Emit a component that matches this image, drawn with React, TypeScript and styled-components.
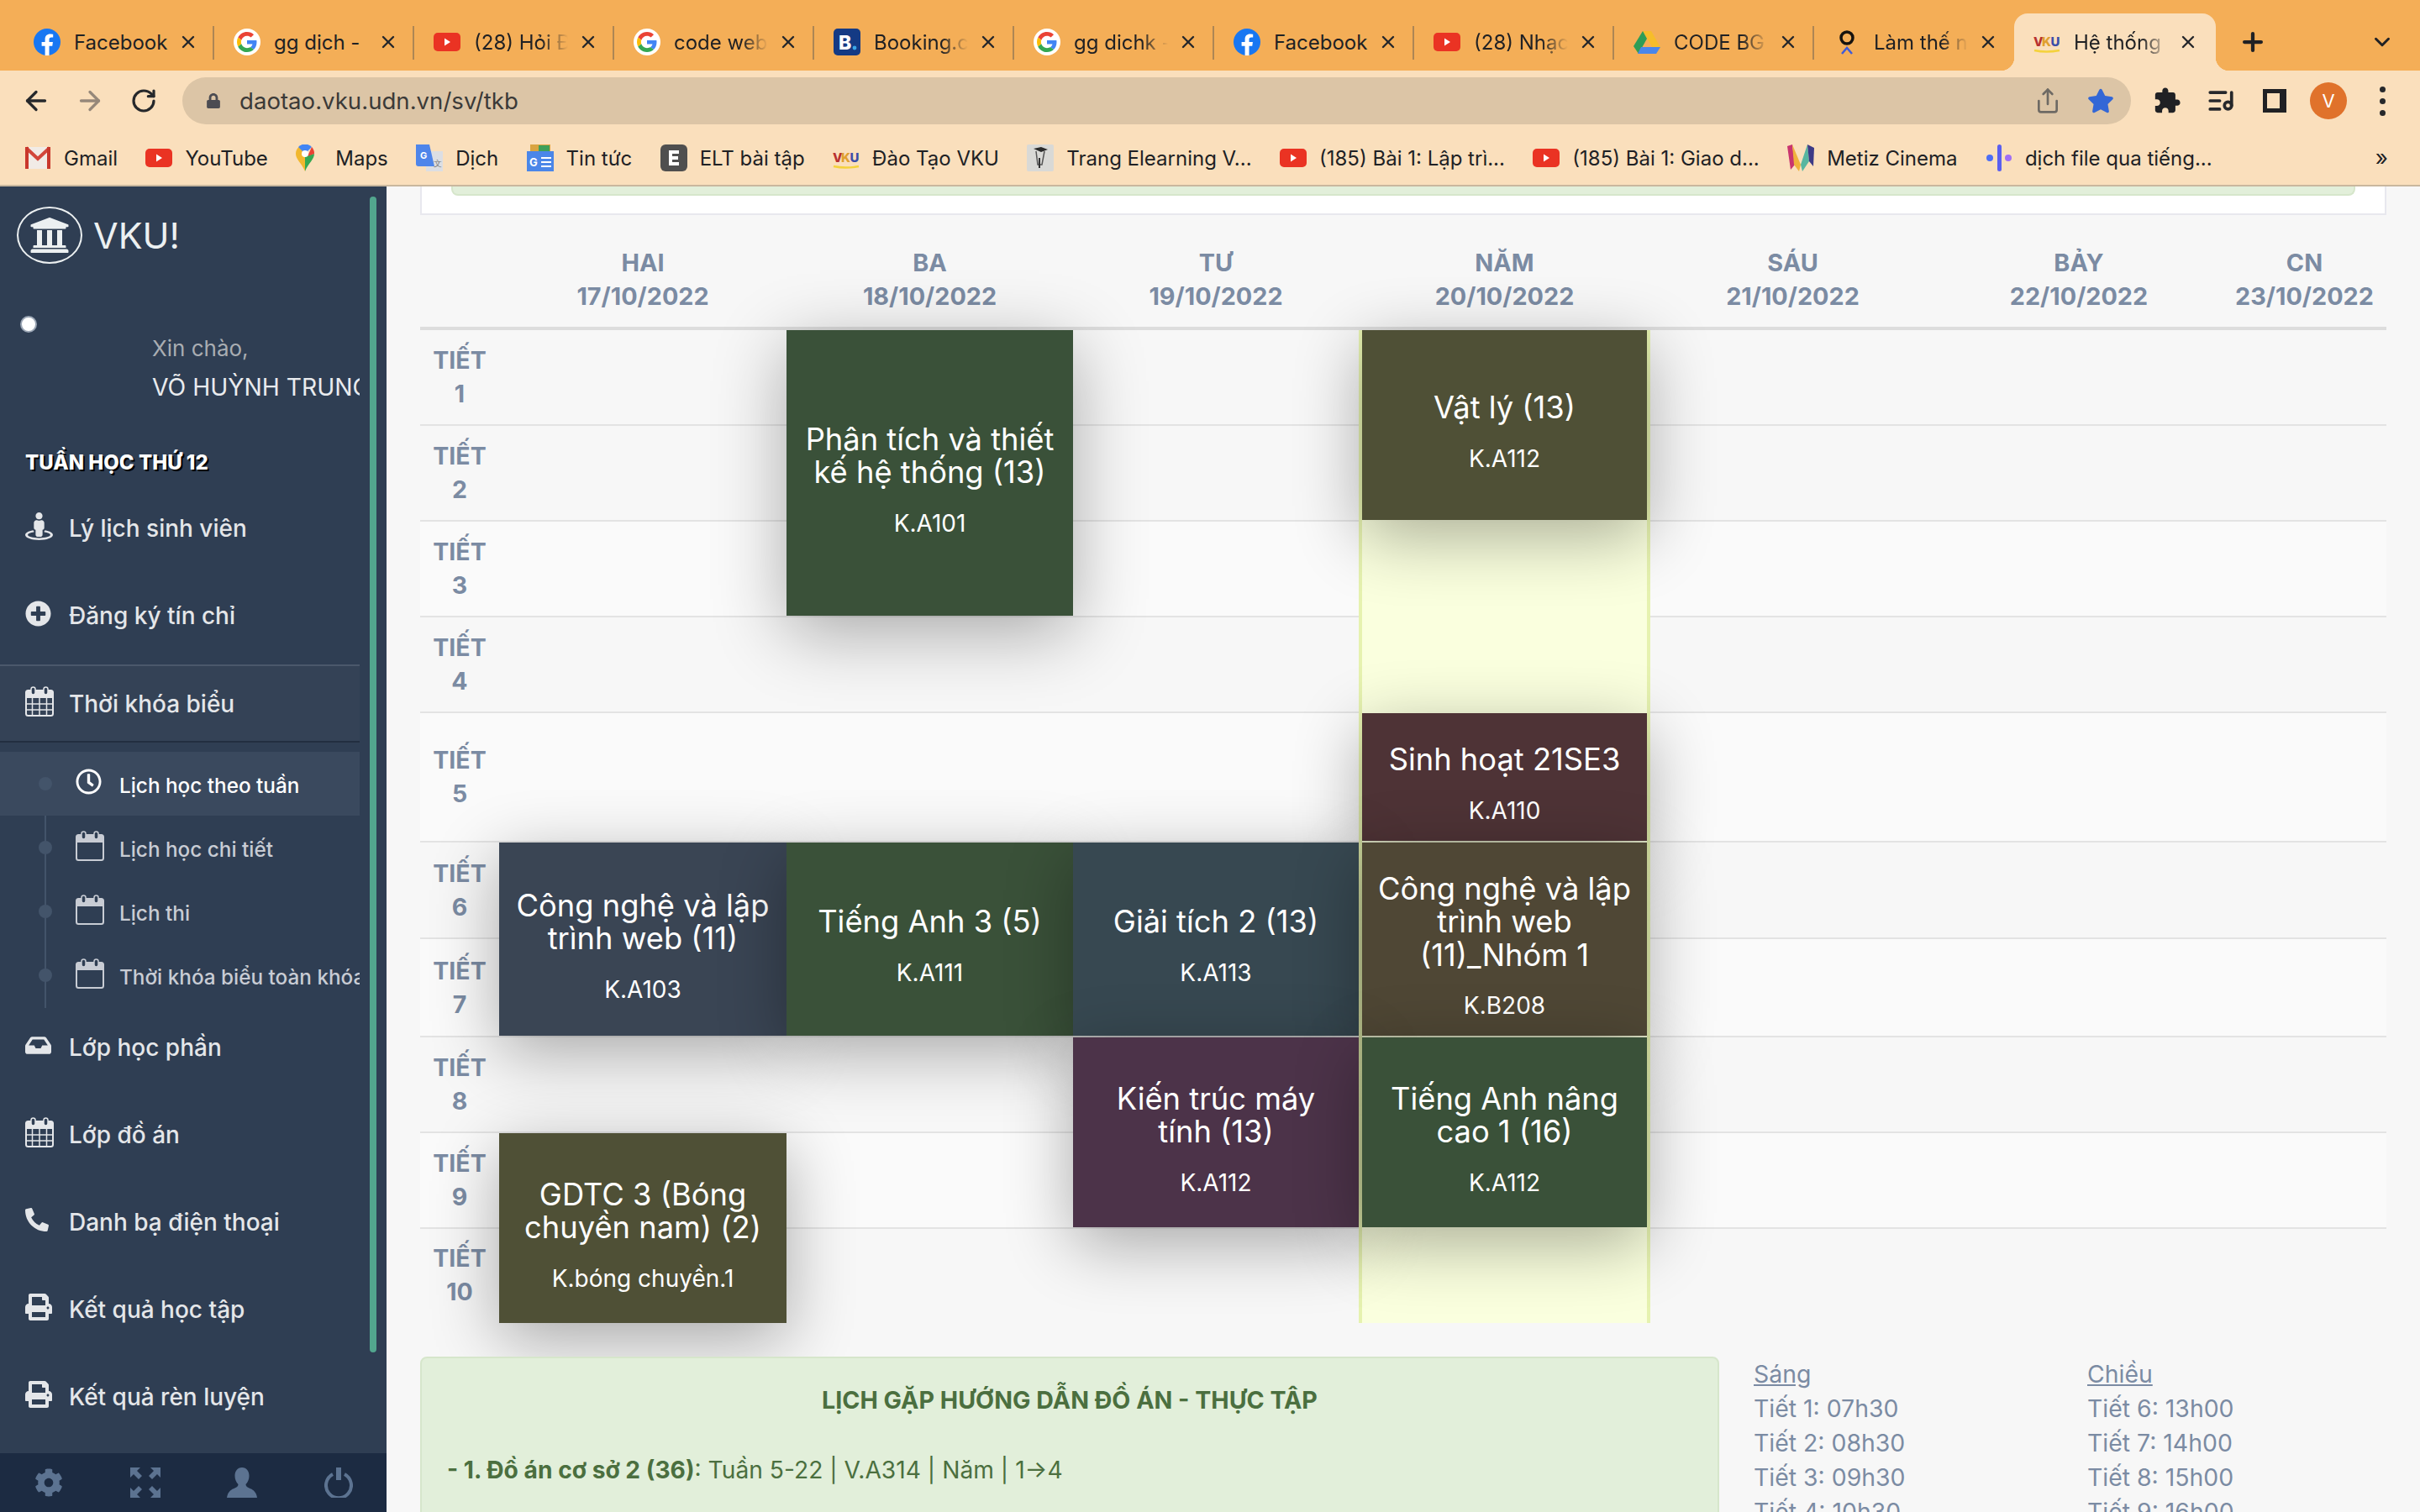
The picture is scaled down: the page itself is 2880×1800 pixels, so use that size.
import React from 'react';
import styled, { createGlobalStyle } from 'styled-components';
import { ArrowLeft, ArrowRight, RotateCw, Share, ListMusic, Plus, X, ChevronDown } from 'lucide-react';
import {
  FaUniversity,
  FaStreetView,
  FaPlusCircle,
  FaRegClock,
  FaInbox,
  FaPhoneAlt,
  FaPrint,
  FaCog,
  FaLock,
  FaStar,
} from 'react-icons/fa';

const GlobalStyle = createGlobalStyle`
  html, body {
    margin: 0;
    padding: 0;
    height: 1800px;
    overflow: hidden;
    background: #f7f7f7;
    font-family: Inter, "Noto Sans", "Liberation Sans", sans-serif;
  }
  * { box-sizing: border-box; }
`;

/* favicons */
const Fb = () => (
  <svg width="32" height="32" viewBox="0 0 24 24">
    <circle cx="12" cy="12" r="12" fill="#1877f2" />
    <path d="M16.7 15.5l.5-3.5h-3.3V9.8c0-1 .5-1.9 2-1.9h1.5V5s-1.4-.2-2.7-.2c-2.7 0-4.5 1.6-4.5 4.6V12h-3v3.5h3V24h3.7v-8.5z" fill="#fff" />
  </svg>
);
const Google = () => (
  <svg width="32" height="32" viewBox="-8 -8 64 64">
    <circle cx="24" cy="24" r="32" fill="#fff" />
    <path fill="#ea4335" d="M24 9.5c3.54 0 6.71 1.22 9.21 3.6l6.85-6.85C35.9 2.38 30.47 0 24 0 14.62 0 6.51 5.38 2.56 13.22l7.98 6.19C12.43 13.72 17.74 9.5 24 9.5z" />
    <path fill="#4285f4" d="M46.98 24.55c0-1.57-.15-3.09-.38-4.55H24v9.02h12.94c-.58 2.96-2.26 5.48-4.78 7.18l7.73 6c4.51-4.18 7.09-10.36 7.09-17.65z" />
    <path fill="#fbbc05" d="M10.53 28.59c-.48-1.45-.76-2.99-.76-4.59s.27-3.14.76-4.59l-7.98-6.19C.92 16.46 0 20.12 0 24c0 3.88.92 7.54 2.56 10.78l7.97-6.19z" />
    <path fill="#34a853" d="M24 48c6.48 0 11.93-2.13 15.89-5.81l-7.73-6c-2.15 1.45-4.92 2.3-8.16 2.3-6.26 0-11.57-4.22-13.47-9.91l-7.98 6.19C6.51 42.62 14.62 48 24 48z" />
  </svg>
);
const Yt = () => (
  <svg width="32" height="32" viewBox="0 0 32 32">
    <rect x="0" y="5" width="32" height="22" rx="5" fill="#ea3323" />
    <path d="M13 11.5l7 4.5-7 4.5z" fill="#fff" />
  </svg>
);
const Booking = () => (
  <svg width="32" height="32" viewBox="0 0 32 32">
    <rect width="32" height="32" rx="5" fill="#143a84" />
    <text x="6" y="25" fontFamily="Inter, sans-serif" fontWeight="800" fontSize="23" fill="#fff">B</text>
    <circle cx="25" cy="23" r="2.4" fill="#3aa6e8" />
  </svg>
);
const Drive = () => (
  <svg width="32" height="32" viewBox="0 0 32 32">
    <path d="M11 3h10l11 19-5 8z" fill="#f6bd2a" />
    <path d="M11 3l5 9-10 18-6-9z" fill="#2d9d56" />
    <path d="M9 22h23l-5 8H5z" fill="#4a86ea" />
  </svg>
);
const Lens = () => (
  <svg width="32" height="32" viewBox="0 0 32 32">
    <circle cx="16" cy="11" r="7" fill="none" stroke="#17130f" strokeWidth="3.5" />
    <path d="M10 30l6-7 6 7" fill="none" stroke="#3f5bd8" strokeWidth="2.5" />
  </svg>
);
const Vku = () => (
  <svg width="32" height="32" viewBox="0 0 32 32">
    <text x="0" y="21" fontFamily="Inter, sans-serif" fontWeight="800" fontSize="15" fill="#b8312f">V</text>
    <text x="10" y="21" fontFamily="Inter, sans-serif" fontWeight="800" fontSize="15" fill="#e0a030">K</text>
    <text x="20.5" y="21" fontFamily="Inter, sans-serif" fontWeight="800" fontSize="15" fill="#3b4ea8">U</text>
    <path d="M1 26q14 3 30 0" fill="none" stroke="#f4d23c" strokeWidth="2.5" />
  </svg>
);
const Gmail = () => (
  <svg width="32" height="32" viewBox="0 0 32 32">
    <rect x="1" y="3" width="30" height="26" fill="#f1ebe6" />
    <path d="M2 4l14 13L30 4" fill="none" stroke="#d2463a" strokeWidth="4" />
    <path d="M3 3v26M29 3v26" stroke="#c9372c" strokeWidth="4" />
  </svg>
);
const Maps = () => (
  <svg width="32" height="32" viewBox="5 0 32 32">
    <path d="M16 0c-6 0-11 5-11 11 0 7 7 11 11 21z" fill="#f1b72e" />
    <path d="M16 32c4-10 11-14 11-21L16 14z" fill="#34a853" />
    <path d="M8 3a11 11 0 0 1 16 0l-5 5h-6z" fill="#4285f4" />
    <path d="M24 3a11 11 0 0 1 3 8l-8 3z" fill="#ea4335" />
    <circle cx="16" cy="11" r="4" fill="#fff" />
  </svg>
);
const Translate = () => (
  <svg width="32" height="32" viewBox="0 0 32 32">
    <rect x="12" y="8" width="20" height="24" fill="#dcdee3" />
    <path d="M0 0h16l6 26H3a3 3 0 0 1-3-3z" fill="#4e85ea" />
    <text x="5" y="17" fontFamily="Inter, sans-serif" fontWeight="700" fontSize="11" fill="#fff">G</text>
    <text x="21" y="26" fontFamily="Inter, sans-serif" fontSize="10" fill="#777">文</text>
  </svg>
);
const News = () => (
  <svg width="32" height="32" viewBox="0 0 32 32">
    <rect x="4" y="0" width="24" height="12" fill="#d9a441" />
    <rect x="14" y="1" width="13" height="8" fill="#3fa05a" />
    <rect x="0" y="8" width="32" height="24" fill="#4b86e8" />
    <text x="3" y="26" fontFamily="Inter, sans-serif" fontWeight="700" fontSize="13" fill="#fff">G</text>
    <path d="M17 16h12M17 21h12M17 26h12" stroke="#fff" strokeWidth="2" />
  </svg>
);
const Elt = () => (
  <svg width="32" height="32" viewBox="0 0 32 32">
    <rect width="32" height="32" rx="6" fill="#4f4f4f" />
    <path d="M10 7h12v4h-8v3h7v4h-7v3h8v4H10z" fill="#fff" />
  </svg>
);
const Elearning = () => (
  <svg width="32" height="32" viewBox="0 0 32 32">
    <rect width="32" height="32" rx="2" fill="#d9d9d6" />
    <path d="M8 5l9-2 8 3-8 3z" fill="#2a2a2a" />
    <path d="M11 8l2 16h5l3-16" fill="none" stroke="#555" strokeWidth="1.5" />
    <path d="M15 16v12" stroke="#333" strokeWidth="2" />
  </svg>
);
const Metiz = () => (
  <svg width="32" height="32" viewBox="0 0 32 32">
    <path d="M0 2l6-2 3 24-5 6z" fill="#c9356f" />
    <path d="M6 0l10 24-2 8-6-8z" fill="#f0b13c" />
    <path d="M16 24L24 0l2 20-8 12z" fill="#58b6a0" />
    <path d="M24 0l8 4-1 22-5-6z" fill="#3d3a86" />
  </svg>
);
const Voice = () => (
  <svg width="32" height="32" viewBox="-2 0 32 32">
    <circle cx="3" cy="16" r="4" fill="#4c6ef5" />
    <rect x="12" y="0" width="5" height="32" rx="2.5" fill="#5a5ff0" />
    <circle cx="25" cy="16" r="4" fill="#a06ef5" />
  </svg>
);
const ExtensionIcon = () => (
  <svg width="34" height="34" viewBox="0 0 24 24" fill="#202124">
    <path d="M20.5 11H19V7c0-1.1-.9-2-2-2h-4V3.5C13 2.12 11.88 1 10.5 1S8 2.12 8 3.5V5H4c-1.1 0-1.99.9-1.99 2v3.8H3.5c1.49 0 2.7 1.21 2.7 2.7s-1.21 2.7-2.7 2.7H2V20c0 1.1.9 2 2 2h3.8v-1.5c0-1.49 1.21-2.7 2.7-2.7 1.49 0 2.7 1.21 2.7 2.7V22H17c1.1 0 2-.9 2-2v-4h1.5c1.38 0 2.5-1.12 2.5-2.5S21.88 11 20.5 11z" />
  </svg>
);

/* browser chrome */
const Chrome = styled.header`
  flex: none;
  display: flex;
  flex-direction: column;
  height: 222px;
  background: #fadfbc;
  border-bottom: 2px solid #c9b79e;
  color: #202124;
`;
const TabStrip = styled.div`
  height: 84px;
  flex: none;
  display: flex;
  align-items: flex-end;
  padding-left: 17px;
  background: #f4ae57;
`;
const Tab = styled.div<{ $active?: boolean; $noSep?: boolean }>`
  position: relative;
  flex: none;
  width: ${p => (p.$active ? '240px' : '238px')};
  height: 68px;
  display: flex;
  align-items: center;
  padding-left: 23px;
  ${p => p.$active && 'background: #fadfbc; border-radius: 16px 16px 0 0;'}
  ${p =>
    !p.$active &&
    !p.$noSep &&
    `&::after {
      content: '';
      position: absolute;
      right: 0;
      top: 15px;
      width: 2px;
      height: 40px;
      background: #ad8654;
    }`}
  ${p =>
    p.$active &&
    `&::before, &::after {
      content: '';
      position: absolute;
      bottom: 0;
      width: 16px;
      height: 16px;
    }
    &::before { left: -16px; background: radial-gradient(circle at 0 0, transparent 16px, #fadfbc 16.5px); }
    &::after { right: -16px; background: radial-gradient(circle at 100% 0, transparent 16px, #fadfbc 16.5px); }`}
`;
const TabIcon = styled.span`
  flex: none;
  width: 32px;
  height: 32px;
  display: block;
`;
const TabTitle = styled.span<{ $fade?: boolean }>`
  width: 112px;
  margin-left: 16px;
  font-size: 24px;
  white-space: nowrap;
  overflow: hidden;
  ${p =>
    p.$fade &&
    `-webkit-mask-image: linear-gradient(to right, #000 72%, transparent 100%);
     mask-image: linear-gradient(to right, #000 72%, transparent 100%);`}
`;
const TabClose = styled.span`
  display: flex;
  margin-left: 12px;
  color: #26282b;
`;
const StripBtn = styled.span<{ $left: number }>`
  height: 68px;
  display: flex;
  align-items: center;
  margin-left: ${p => p.$left}px;
  color: #202124;
`;
const UrlRow = styled.div`
  height: 72px;
  flex: none;
  display: flex;
  align-items: center;
  padding: 0 13px 0 11px;
`;
const ToolBtn = styled.span<{ $dim?: boolean }>`
  flex: none;
  width: 64px;
  height: 56px;
  display: flex;
  align-items: center;
  justify-content: center;
  color: ${p => (p.$dim ? '#96887a' : '#26282b')};
`;
const UrlBar = styled.div`
  flex: 1;
  height: 56px;
  margin: 0 11px 0 14px;
  padding: 0 5px 0 28px;
  display: flex;
  align-items: center;
  border-radius: 28px;
  background: #dcc5a6;
`;
const UrlText = styled.span`
  flex: 1;
  margin-left: 22px;
  font-size: 27.6px;
  color: #3b3a38;
`;
const UrlAction = styled.span<{ $w: number }>`
  flex: none;
  width: ${p => p.$w}px;
  display: flex;
  justify-content: center;
`;
const Avatar = styled.span`
  width: 44px;
  height: 44px;
  display: flex;
  align-items: center;
  justify-content: center;
  border-radius: 50%;
  background: #e0722b;
  color: #fff;
  font-size: 22px;
`;
const Dots = styled.span`
  display: flex;
  flex-direction: column;
  gap: 7px;
  i {
    display: block;
    width: 7px;
    height: 7px;
    border-radius: 50%;
    background: #26282b;
  }
`;
const Bookmarks = styled.div`
  position: relative;
  flex: 1;
  display: flex;
  align-items: center;
  gap: 33.4px;
  padding-left: 29px;
  font-size: 24px;
`;
const Bookmark = styled.span`
  flex: none;
  display: flex;
  align-items: center;
  gap: 15px;
  white-space: nowrap;
`;
const MoreMarks = styled.span`
  position: absolute;
  right: 38px;
  top: 16px;
  font-size: 26px;
`;

/* sidebar */
const Body = styled.div`
  flex: 1;
  min-height: 0;
  display: flex;
`;
const Sidebar = styled.aside`
  position: relative;
  flex: none;
  width: 460px;
  display: flex;
  flex-direction: column;
  background: #2f3e53;
  color: #e4e6e9;
`;
const ScrollThumb = styled.div`
  position: absolute;
  top: 12px;
  left: 440px;
  width: 8px;
  height: 1376px;
  border-radius: 4px;
  background: #52a68e;
`;
const SideInner = styled.div`
  width: 428px;
  overflow: hidden;
  display: flex;
  flex-direction: column;
  flex: 1;
`;
const LogoRow = styled.div`
  height: 116px;
  flex: none;
  display: flex;
  align-items: center;
  padding-left: 20px;
  color: #ecf0f1;
`;
const LogoMark = styled.span`
  flex: none;
  width: 78px;
  height: 68px;
  display: flex;
  align-items: center;
  justify-content: center;
  border: 2px solid #ecf0f1;
  border-radius: 50%;
`;
const LogoText = styled.span`
  margin-left: 13px;
  font-size: 43px;
`;
const Profile = styled.div`
  flex: none;
  height: 179px;
  display: flex;
  align-items: flex-start;
  padding: 38px 0 0 24px;
`;
const BrokenAvatar = styled.span`
  flex: none;
  width: 20px;
  height: 20px;
  border-radius: 50%;
  background: #fff;
  border: 2px solid #9aa5b4;
`;
const Greeting = styled.div`
  margin: 16px 0 0 137px;
  white-space: nowrap;
`;
const Hello = styled.div`
  font-size: 26px;
  line-height: 46px;
  color: #a9adb2;
`;
const StudentName = styled.div`
  font-size: 28.3px;
  line-height: 46px;
  color: #e9ebee;
`;
const WeekLabel = styled.div`
  flex: none;
  height: 60px;
  padding: 6px 0 0 30px;
  display: flex;
  align-items: center;
  font-size: 24px;
  font-weight: 800;
  color: #fff;
  text-shadow: 2px 2px 0 #000;
`;
const MenuItem = styled.div<{ $open?: boolean }>`
  flex: none;
  height: ${p => (p.$open ? '93px' : '104px')};
  display: flex;
  align-items: center;
  padding-left: 30px;
  font-size: 28px;
  font-weight: 500;
  white-space: nowrap;
  ${p =>
    p.$open &&
    `margin-top: 6px;
     background: #344256;
     border-top: 2px solid #4b586b;
     border-bottom: 2px solid #222e40;`}
`;
const MenuIcon = styled.span`
  flex: none;
  width: 52px;
  margin-top: -6px;
  display: flex;
`;
const SubMenu = styled.div`
  position: relative;
  flex: none;
  height: 316px;
  margin-bottom: -5px;
  padding-top: 11px;
  &::before {
    content: '';
    position: absolute;
    left: 53px;
    top: 11px;
    bottom: 0;
    width: 2px;
    background: #43546a;
  }
`;
const SubItem = styled.div<{ $current?: boolean }>`
  position: relative;
  height: 76px;
  display: flex;
  align-items: center;
  padding: 3px 0 0 90px;
  font-size: 24.3px;
  font-weight: 500;
  white-space: nowrap;
  color: ${p => (p.$current ? '#fff' : '#c8ccd4')};
  ${p => p.$current && 'background: #3a495e;'}
  &::before {
    content: '';
    position: absolute;
    left: 46px;
    top: 30px;
    width: 16px;
    height: 16px;
    border-radius: 50%;
    background: #43546a;
  }
`;
const SubIcon = styled.span`
  flex: none;
  width: 52px;
  margin-top: -8px;
  display: flex;
`;
const SideFooter = styled.div`
  flex: none;
  height: 70px;
  display: grid;
  grid-template-columns: repeat(4, 1fr);
  background: #1c2b42;
  color: #5c7391;
  span {
    display: flex;
    align-items: center;
    justify-content: center;
  }
`;

const CalendarIcon = ({ grid }: { grid?: boolean }) => (
  <svg width="34" height="36" viewBox="0 0 34 36" fill="none" stroke="currentColor">
    <rect x="1" y="5" width="32" height="30" rx="2.5" strokeWidth="2" />
    <path d="M1 7a2 2 0 0 1 2-2h28a2 2 0 0 1 2 2v7H1z" fill="currentColor" stroke="none" />
    <rect x="7" y="1" width="5" height="9" rx="2.5" fill="#2f3e53" strokeWidth="1.5" />
    <rect x="22" y="1" width="5" height="9" rx="2.5" fill="#2f3e53" strokeWidth="1.5" />
    {grid && <path d="M1 21h32M1 28h32M8.5 14v21M17 14v21M25.5 14v21" strokeWidth="1.5" />}
  </svg>
);
const FullscreenIcon = () => (
  <svg width="36" height="36" viewBox="0 0 36 36" fill="currentColor">
    <path d="M0 0h12l-4 4 6 6-4 4-6-6-4 4zM36 0H24l4 4-6 6 4 4 6-6 4 4zM0 36V24l4 4 6-6 4 4-6 6 4 4zM36 36H24l4-4-6-6 4-4 6 6 4-4z" />
  </svg>
);
const UserIcon = () => (
  <svg width="36" height="36" viewBox="0 0 36 36" fill="currentColor">
    <path d="M18 0c5.5 0 8.5 4.5 8.5 10 0 4-1.5 7.5-4 10 0 2 1 3 4 4.5 5 2 8.5 4.5 9.5 11.5H0c1-7 4.5-9.5 9.5-11.5 3-1.5 4-2.5 4-4.5-2.5-2.5-4-6-4-10C9.5 4.5 12.5 0 18 0z" />
  </svg>
);
const PowerIcon = () => (
  <svg width="34" height="36" viewBox="0 0 34 36" fill="none" stroke="currentColor" strokeWidth="4">
    <path d="M10 8a15 15 0 1 0 14 0" />
    <path d="M17 0v15" strokeWidth="6" />
  </svg>
);
const SidePanelIcon = () => (
  <svg width="28" height="28" viewBox="0 0 28 28">
    <path d="M0 0h28v28H0z M5 5v18h15V5z" fill="#202124" fillRule="evenodd" />
  </svg>
);

/* timetable */
const Main = styled.main`
  flex: 1;
  min-width: 0;
  overflow: hidden;
  padding: 0 40px;
  background: #f7f7f7;
`;
const TopCard = styled.div`
  height: 34px;
  padding: 0 35px;
  background: #fff;
  border: 2px solid #e8e8ee;
  border-top: 0;
`;
const TopCardAlert = styled.div`
  height: 11px;
  background: #e2efda;
  border: 2px solid #d6e6cb;
  border-top: 0;
  border-radius: 0 0 8px 8px;
`;
const Grid = styled.div`
  display: grid;
  grid-template-columns: 94px 342px 341px 340px 347px 339px 342px 195px;
  grid-template-rows: 137px 114px 114px 114px 114px 154px 115px 117px 114px 114px 112px;
`;
const HeadCell = styled.div`
  display: flex;
  flex-direction: column;
  justify-content: flex-end;
  align-items: center;
  padding-bottom: 16px;
  border-bottom: 4px solid #dddddd;
  font-size: 28.8px;
  font-weight: 700;
  line-height: 40px;
  color: #7b8ba3;
`;
const PeriodRow = styled.div<{ $row: number }>`
  grid-column: 1 / -1;
  grid-row: ${p => p.$row + 1};
  display: flex;
  align-items: center;
  border-bottom: 2px solid ${p => (p.$row === 10 ? 'transparent' : '#e3e3e3')};
  background: ${p => (p.$row % 2 === 1 && p.$row > 1 ? '#fafafa' : '#f7f7f7')};
`;
const PeriodLabel = styled.div`
  width: 94px;
  text-align: center;
  font-size: 28.5px;
  font-weight: 700;
  line-height: 40px;
  color: #7b8ba3;
`;
const TodayColumn = styled.div`
  grid-column: 5;
  grid-row: 2 / -1;
  background: #faffde;
  border-left: 4px solid #e6f2b0;
  border-right: 4px solid #e6f2b0;
`;
const Lesson = styled.div<{ $col: number; $from: number; $span: number; $bg: string; $today?: boolean }>`
  grid-column: ${p => p.$col + 1};
  grid-row: ${p => p.$from + 1} / span ${p => p.$span};
  display: flex;
  flex-direction: column;
  align-items: center;
  justify-content: center;
  margin: 0 ${p => (p.$today ? '4px' : '0')} ${p => (p.$from + p.$span > 10 ? '0' : '2px')};
  padding: 20px 18px 0;
  background: ${p => p.$bg};
  box-shadow: 0 20px 80px rgba(0, 0, 0, 0.32);
  color: #fff;
  text-align: center;
`;
const LessonTitle = styled.div`
  font-size: 36.3px;
  line-height: 39.5px;
  margin-bottom: 20px;
`;
const LessonRoom = styled.div`
  font-size: 28px;
  line-height: 40px;
`;
const BelowTable = styled.div`
  display: flex;
  margin-top: 40px;
`;
const Guidance = styled.section`
  flex: none;
  width: 1546px;
  height: 300px;
  padding: 30px 30px 0;
  border: 2px solid #d6e6cb;
  border-radius: 8px;
  background: #e2efda;
  color: #4b6f3f;
`;
const GuidanceTitle = styled.div`
  text-align: center;
  font-size: 28.6px;
  font-weight: 700;
  line-height: 40px;
`;
const GuidanceLine = styled.div`
  margin-top: 43px;
  font-size: 28.2px;
  line-height: 40px;
  b { font-weight: 700; }
`;
const TimeColumns = styled.div`
  display: grid;
  grid-template-columns: 397px 1fr;
  align-content: start;
  margin-left: 41px;
  font-size: 28.4px;
  line-height: 41px;
  color: #7b8ba3;
`;
const TimeHead = styled.div`
  text-decoration: underline;
`;

const tabs = [
  { icon: <Fb />, title: 'Facebook' },
  { icon: <Google />, title: 'gg dịch -' },
  { icon: <Yt />, title: '(28) Hỏi Đ', fade: true },
  { icon: <Google />, title: 'code web', fade: true },
  { icon: <Booking />, title: 'Booking.c', fade: true },
  { icon: <Google />, title: 'gg dichk -', fade: true },
  { icon: <Fb />, title: 'Facebook' },
  { icon: <Yt />, title: '(28) Nhạc', fade: true },
  { icon: <Drive />, title: 'CODE BG', fade: true },
  { icon: <Lens />, title: 'Làm thế n', fade: true, noSep: true },
  { icon: <Vku />, title: 'Hệ thống', fade: true, active: true },
];

const bookmarks = [
  { icon: <Gmail />, title: 'Gmail' },
  { icon: <Yt />, title: 'YouTube' },
  { icon: <Maps />, title: 'Maps' },
  { icon: <Translate />, title: 'Dịch' },
  { icon: <News />, title: 'Tin tức' },
  { icon: <Elt />, title: 'ELT bài tập' },
  { icon: <Vku />, title: 'Đào Tạo VKU' },
  { icon: <Elearning />, title: 'Trang Elearning V...' },
  { icon: <Yt />, title: '(185) Bài 1: Lập trì...' },
  { icon: <Yt />, title: '(185) Bài 1: Giao d...' },
  { icon: <Metiz />, title: 'Metiz Cinema' },
  { icon: <Voice />, title: 'dịch file qua tiếng...' },
];

const days = [
  ['HAI', '17/10/2022'],
  ['BA', '18/10/2022'],
  ['TƯ', '19/10/2022'],
  ['NĂM', '20/10/2022'],
  ['SÁU', '21/10/2022'],
  ['BẢY', '22/10/2022'],
  ['CN', '23/10/2022'],
];

const lessons = [
  { col: 2, from: 1, span: 3, bg: '#3a5139', title: 'Phân tích và thiết kế hệ thống (13)', room: 'K.A101' },
  { col: 4, from: 1, span: 2, bg: '#4f5036', title: 'Vật lý (13)', room: 'K.A112' },
  { col: 4, from: 5, span: 1, bg: '#4e3336', title: 'Sinh hoạt 21SE3', room: 'K.A110' },
  { col: 1, from: 6, span: 2, bg: '#3a4554', title: 'Công nghệ và lập trình web (11)', room: 'K.A103' },
  { col: 2, from: 6, span: 2, bg: '#3a5139', title: 'Tiếng Anh 3 (5)', room: 'K.A111' },
  { col: 3, from: 6, span: 2, bg: '#374851', title: 'Giải tích 2 (13)', room: 'K.A113' },
  { col: 4, from: 6, span: 2, bg: '#4f4735', title: 'Công nghệ và lập trình web (11)_Nhóm 1', room: 'K.B208' },
  { col: 3, from: 8, span: 2, bg: '#4c3349', title: 'Kiến trúc máy tính (13)', room: 'K.A112' },
  { col: 4, from: 8, span: 2, bg: '#3a5139', title: 'Tiếng Anh nâng cao 1 (16)', room: 'K.A112' },
  { col: 1, from: 9, span: 2, bg: '#4f5036', title: 'GDTC 3 (Bóng chuyền nam) (2)', room: 'K.bóng chuyền.1' },
];

const times = [
  ['Tiết 1: 07h30', 'Tiết 6: 13h00'],
  ['Tiết 2: 08h30', 'Tiết 7: 14h00'],
  ['Tiết 3: 09h30', 'Tiết 8: 15h00'],
  ['Tiết 4: 10h30', 'Tiết 9: 16h00'],
];

const App = () => {
  return (
    <Page>
      <GlobalStyle />
      <Chrome>
        <TabStrip>
          {tabs.map((t, i) => (
            <Tab key={i} $active={t.active} $noSep={t.noSep}>
              <TabIcon>{t.icon}</TabIcon>
              <TabTitle $fade={t.fade}>{t.title}</TabTitle>
              <TabClose>
                <X size={24} strokeWidth={2.4} />
              </TabClose>
            </Tab>
          ))}
          <StripBtn $left={27}>
            <Plus size={34} strokeWidth={3} />
          </StripBtn>
          <StripBtn $left={122}>
            <ChevronDown size={30} strokeWidth={2.4} />
          </StripBtn>
        </TabStrip>
        <UrlRow>
          <ToolBtn>
            <ArrowLeft size={36} strokeWidth={2.2} />
          </ToolBtn>
          <ToolBtn $dim>
            <ArrowRight size={36} strokeWidth={2.2} />
          </ToolBtn>
          <ToolBtn>
            <RotateCw size={32} strokeWidth={2.4} />
          </ToolBtn>
          <UrlBar>
            <FaLock size={18} color="#4c4c52" />
            <UrlText>daotao.vku.udn.vn/sv/tkb</UrlText>
            <UrlAction $w={63}>
              <Share size={32} color="#6e6a64" strokeWidth={2} />
            </UrlAction>
            <UrlAction $w={63}>
              <FaStar size={32} color="#3367d6" />
            </UrlAction>
          </UrlBar>
          <ToolBtn>
            <ExtensionIcon />
          </ToolBtn>
          <ToolBtn>
            <ListMusic size={34} strokeWidth={2.6} />
          </ToolBtn>
          <ToolBtn>
            <SidePanelIcon />
          </ToolBtn>
          <ToolBtn>
            <Avatar>V</Avatar>
          </ToolBtn>
          <ToolBtn>
            <Dots>
              <i />
              <i />
              <i />
            </Dots>
          </ToolBtn>
        </UrlRow>
        <Bookmarks>
          {bookmarks.map((b, i) => (
            <Bookmark key={i}>
              <TabIcon>{b.icon}</TabIcon>
              {b.title}
            </Bookmark>
          ))}
          <MoreMarks>»</MoreMarks>
        </Bookmarks>
      </Chrome>
      <Body>
        <Sidebar>
          <ScrollThumb />
          <SideInner>
            <LogoRow>
              <LogoMark>
                <FaUniversity size={48} />
              </LogoMark>
              <LogoText>VKU!</LogoText>
            </LogoRow>
            <Profile>
              <BrokenAvatar />
              <Greeting>
                <Hello>Xin chào,</Hello>
                <StudentName>VÕ HUỲNH TRUNG</StudentName>
              </Greeting>
            </Profile>
            <WeekLabel>TUẦN HỌC THỨ 12</WeekLabel>
            <MenuItem>
              <MenuIcon><FaStreetView size={33} /></MenuIcon>
              Lý lịch sinh viên
            </MenuItem>
            <MenuItem>
              <MenuIcon><FaPlusCircle size={31} /></MenuIcon>
              Đăng ký tín chỉ
            </MenuItem>
            <MenuItem $open>
              <MenuIcon><CalendarIcon grid /></MenuIcon>
              Thời khóa biểu
            </MenuItem>
            <SubMenu>
              <SubItem $current>
                <SubIcon><FaRegClock size={31} color="#fff" /></SubIcon>
                Lịch học theo tuần
              </SubItem>
              <SubItem>
                <SubIcon><CalendarIcon /></SubIcon>
                Lịch học chi tiết
              </SubItem>
              <SubItem>
                <SubIcon><CalendarIcon /></SubIcon>
                Lịch thi
              </SubItem>
              <SubItem>
                <SubIcon><CalendarIcon /></SubIcon>
                Thời khóa biểu toàn khóa
              </SubItem>
            </SubMenu>
            <MenuItem>
              <MenuIcon><FaInbox size={31} /></MenuIcon>
              Lớp học phần
            </MenuItem>
            <MenuItem>
              <MenuIcon><CalendarIcon grid /></MenuIcon>
              Lớp đồ án
            </MenuItem>
            <MenuItem>
              <MenuIcon><FaPhoneAlt size={28} /></MenuIcon>
              Danh bạ điện thoại
            </MenuItem>
            <MenuItem>
              <MenuIcon><FaPrint size={32} /></MenuIcon>
              Kết quả học tập
            </MenuItem>
            <MenuItem>
              <MenuIcon><FaPrint size={32} /></MenuIcon>
              Kết quả rèn luyện
            </MenuItem>
          </SideInner>
          <SideFooter>
            <span><FaCog size={34} /></span>
            <span><FullscreenIcon /></span>
            <span><UserIcon /></span>
            <span><PowerIcon /></span>
          </SideFooter>
        </Sidebar>
        <Main>
          <TopCard>
            <TopCardAlert />
          </TopCard>
          <Grid>
            <HeadCell />
            {days.map(d => (
              <HeadCell key={d[0]}>
                <div>{d[0]}</div>
                <div>{d[1]}</div>
              </HeadCell>
            ))}
            {Array.from({ length: 10 }, (_, i) => (
              <PeriodRow key={i} $row={i + 1}>
                <PeriodLabel>
                  TIẾT
                  <br />
                  {i + 1}
                </PeriodLabel>
              </PeriodRow>
            ))}
            <TodayColumn />
            {lessons.map(l => (
              <Lesson key={l.title + l.col} $col={l.col} $from={l.from} $span={l.span} $bg={l.bg} $today={l.col === 4}>
                <LessonTitle>{l.title}</LessonTitle>
                <LessonRoom>{l.room}</LessonRoom>
              </Lesson>
            ))}
          </Grid>
          <BelowTable>
            <Guidance>
              <GuidanceTitle>LỊCH GẶP HƯỚNG DẪN ĐỒ ÁN - THỰC TẬP</GuidanceTitle>
              <GuidanceLine>
                <b>- 1. Đồ án cơ sở 2 (36)</b>: Tuần 5-22 | V.A314 | Năm | 1→4
              </GuidanceLine>
            </Guidance>
            <TimeColumns>
              <TimeHead>Sáng</TimeHead>
              <TimeHead>Chiều</TimeHead>
              {times.map(t => (
                <React.Fragment key={t[0]}>
                  <div>{t[0]}</div>
                  <div>{t[1]}</div>
                </React.Fragment>
              ))}
            </TimeColumns>
          </BelowTable>
        </Main>
      </Body>
    </Page>
  );
};

const Page = styled.div`
  width: 2880px;
  height: 1800px;
  display: flex;
  flex-direction: column;
  overflow: hidden;
`;

export default App;
